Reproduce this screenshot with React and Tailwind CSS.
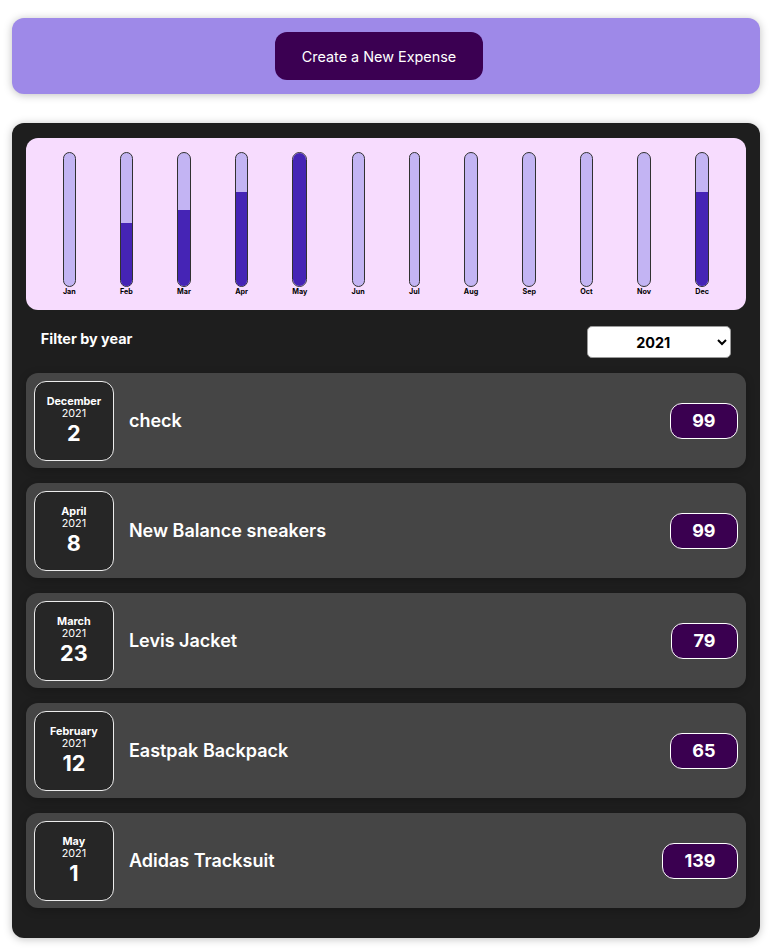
import React from 'react'

const months = [
  ['Jan', 0], ['Feb', 65], ['Mar', 79], ['Apr', 99], ['May', 139], ['Jun', 0],
  ['Jul', 0], ['Aug', 0], ['Sep', 0], ['Oct', 0], ['Nov', 0], ['Dec', 99],
]
const max = 139

const expenses = [
  { month: 'December', day: 2, title: 'check', amount: 99 },
  { month: 'April', day: 8, title: 'New Balance sneakers', amount: 99 },
  { month: 'March', day: 23, title: 'Levis Jacket', amount: 79 },
  { month: 'February', day: 12, title: 'Eastpak Backpack', amount: 65 },
  { month: 'May', day: 1, title: 'Adidas Tracksuit', amount: 139 },
]

function ChartBar({ label, value }) {
  return (
    <div className="flex flex-col items-stretch h-full">
      <div className="flex-1 flex flex-col justify-end border border-[#313131] rounded-[12px] bg-[#c3b4f3] overflow-hidden">
        <div className="bg-[#4524b5] w-full" style={{ height: `${Math.round((value / max) * 100)}%` }} />
      </div>
      <div className="text-[7.2px] leading-[9px] font-bold text-center text-black">{label}</div>
    </div>
  )
}

function ExpenseItem({ e }) {
  return (
    <div className="flex items-center justify-between bg-[#454545] rounded-[12px] p-[7.5px] shadow-[0_2px_8px_rgba(0,0,0,0.25)]">
      <div className="flex items-center flex-1">
        <div className="w-[80px] h-[80px] flex flex-col items-center justify-center border border-[#ececec] bg-[#262626] text-white rounded-[12px]">
          <div className="text-[10.8px] leading-[12px] font-bold">{e.month}</div>
          <div className="text-[10.8px] leading-[12px]">2021</div>
          <div className="text-[21.6px] leading-[26px] font-bold">{e.day}</div>
        </div>
        <h2 className="mx-[15px] text-[18px] font-semibold text-white">{e.title}</h2>
      </div>
      <div className="text-[18px] leading-[20px] font-bold text-white bg-[#3a0050] border border-white rounded-[12px] py-[7px] px-[21.6px]">
        {e.amount}
      </div>
    </div>
  )
}

export default function App() {
  return (
    <div className="font-['Inter',sans-serif] bg-white min-h-[948px] pt-[18px]">
      <div className="ml-[12px] w-[748px] bg-[#9e89e8] rounded-[12px] p-[14px] text-center shadow-[0_1px_8px_rgba(0,0,0,0.25)]">
        <button className="h-[48px] px-[27px] mr-[14px] bg-[#3b0052] text-white text-[14.4px] rounded-[12px] pt-[2px]">
          Create a New Expense
        </button>
      </div>

      <div className="ml-[12px] mt-[29px] w-[748px] bg-[#1e1e1e] rounded-[12px] pt-[15px] px-[14.4px] pb-[30px] shadow-[0_1px_8px_rgba(0,0,0,0.25)]">
        <div className="h-[172px] p-[14.4px] bg-[#f7dcfe] rounded-[12px] flex justify-around">
          {months.map(([m, v]) => (
            <ChartBar key={m} label={m} value={v} />
          ))}
        </div>

        <div className="flex items-center justify-between px-[14.4px] mt-[16px] mb-[15px] text-white">
          <label className="text-[14.4px] font-bold mb-[7px]">Filter by year</label>
          <select className="w-[144px] h-[32px] bg-white text-black text-[14.4px] font-bold rounded-[5px] border border-[#9a9a9a] pl-[44px] pr-[6px]" defaultValue="2021">
            <option>2022</option>
            <option>2021</option>
            <option>2020</option>
            <option>2019</option>
          </select>
        </div>

        <div className="flex flex-col gap-[15px]">
          {expenses.map((e) => (
            <ExpenseItem key={e.title} e={e} />
          ))}
        </div>
      </div>
    </div>
  )
}
